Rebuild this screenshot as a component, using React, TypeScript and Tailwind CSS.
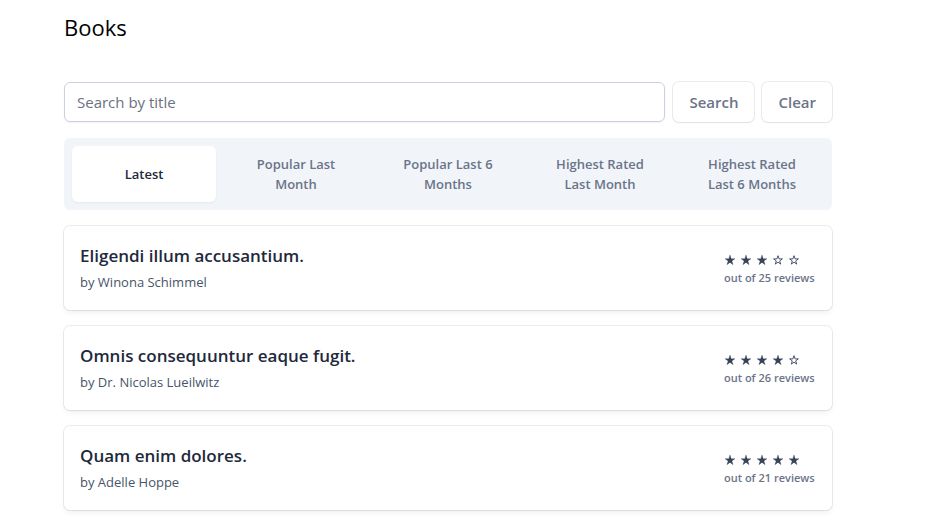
const tabs = ["Latest", "Popular Last Month", "Popular Last 6 Months", "Highest Rated Last Month", "Highest Rated Last 6 Months"];

const books = [
  { title: "Eligendi illum accusantium.", author: "Winona Schimmel", stars: 3, reviews: 25 },
  { title: "Omnis consequuntur eaque fugit.", author: "Dr. Nicolas Lueilwitz", stars: 4, reviews: 26 },
  { title: "Quam enim dolores.", author: "Adelle Hoppe", stars: 5, reviews: 21 },
];

const buttonClass = "h-10 rounded-md bg-white px-4 text-[15px] font-semibold text-[#6b7488] shadow-xs ring-1 ring-[#334155]/10";

function Rating({ value }: { value: number }) {
  return (
    <div className="flex h-5 items-center gap-1 text-[#38425a]" role="img" aria-label={`${value} of 5 stars`}>
      {[1, 2, 3, 4, 5].map((n) => (
        <svg key={n} viewBox="0 0 12 12" className="size-3" fill={n <= value ? "currentColor" : "none"} stroke="currentColor" strokeWidth={n <= value ? 0.3 : 0.9}>
          {n <= value ? (
            <path d="M6 1 7.2 4.7H11L7.9 7 9.1 10.7 6 8.4 2.9 10.7 4.1 7 1 4.7h3.8Z" />
          ) : (
            <path d="M6 1.7 7.1 4.9H10.4L7.7 6.9 8.7 10.1 6 8.2 3.3 10.1 4.3 6.9 1.6 4.9h3.3Z" />
          )}
        </svg>
      ))}
    </div>
  );
}

export default function App() {
  return (
    <main className="mx-16 max-w-3xl pt-2 pb-4 font-['Open_Sans',sans-serif] text-[#1e293b]">
      <h1 className="mb-9 text-[22px] leading-[38px] text-black">Books</h1>
      <form className="mb-4 flex items-center gap-2" onSubmit={(e) => e.preventDefault()}>
        <input aria-label="Search by title" placeholder="Search by title" className="h-10 min-w-0 flex-1 rounded-md border border-[#cbd0e1] px-3 text-[15px] shadow-xs placeholder:text-[#6b7280]" />
        <button className={buttonClass}>Search</button>
        <button type="button" className={buttonClass}>Clear</button>
      </form>
      <nav className="mb-4 flex gap-2 rounded-md bg-[#f1f5fa] p-2">
        {tabs.map((t, i) => (
          <button key={t} className={`flex flex-1 items-center justify-center rounded-md px-4 py-2 text-[13px] leading-5 font-semibold ${i === 0 ? "bg-white text-[#1e293b] shadow-xs" : "text-[#6b7488]"}`}>{t}</button>
        ))}
      </nav>
      <ul className="space-y-4">
        {books.map((b) => (
          <li key={b.title} className="flex items-center justify-between rounded-md bg-white p-4 shadow-md ring-1 shadow-black/5 ring-[#334155]/10">
            <div>
              <a href="#" className="block text-[17px] leading-7 font-semibold">{b.title}</a>
              <span className="block text-[13px] leading-6 text-[#475569]">by {b.author}</span>
            </div>
            <div className="min-w-[92px]">
              <Rating value={b.stars} />
              <div className="text-[11px] leading-4 font-semibold text-[#6b7488]">out of {b.reviews} reviews</div>
            </div>
          </li>
        ))}
      </ul>
    </main>
  );
}
